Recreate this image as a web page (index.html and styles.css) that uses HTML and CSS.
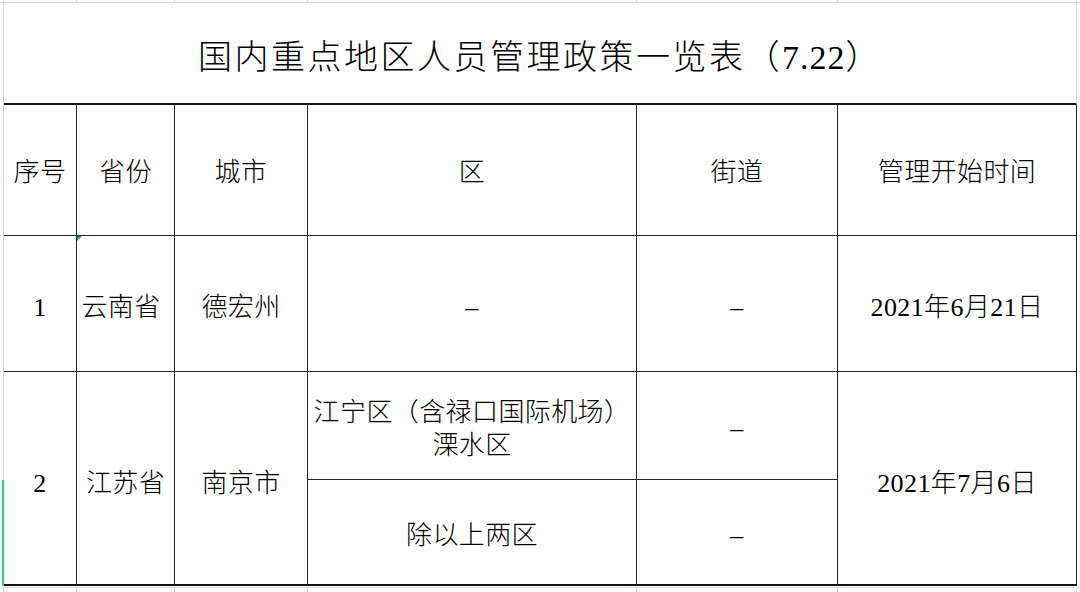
FILE: index.html
```html
<!DOCTYPE html>
<html lang="zh-CN">
<head>
<meta charset="utf-8">
<title>国内重点地区人员管理政策一览表</title>
<link rel="stylesheet" href="styles.css">
</head>
<body>
<div class="sheet">
  <div class="strip strip-top">
    <span></span><span></span><span></span><span></span><span></span><span></span><span></span><span></span>
  </div>
  <div class="table">
    <div class="cell title">国内重点地区人员管理政策一览表（<span class="num">7.22</span>）</div>

    <div class="cell head">序号</div>
    <div class="cell head">省份</div>
    <div class="cell head">城市</div>
    <div class="cell head">区</div>
    <div class="cell head">街道</div>
    <div class="cell head">管理开始时间</div>

    <div class="cell">1</div>
    <div class="cell province-yn"><i class="flag"></i>云南省</div>
    <div class="cell">德宏州</div>
    <div class="cell dash">–</div>
    <div class="cell dash">–</div>
    <div class="cell">2021年6月21日</div>

    <div class="cell span2 last">2</div>
    <div class="cell span2 last">江苏省</div>
    <div class="cell span2 last">南京市</div>
    <div class="cell multi">江宁区（含禄口国际机场）<br>溧水区</div>
    <div class="cell dash sub">–</div>
    <div class="cell span2 last">2021年7月6日</div>
    <div class="cell last sub">除以上两区</div>
    <div class="cell dash last sub">–</div>
  </div>
  <div class="strip strip-bottom">
    <span></span><span></span><span></span><span></span><span></span><span></span><span></span><span></span>
  </div>
  <div class="select-mark"></div>
</div>
</body>
</html>
```

FILE: styles.css
```css
* {
  box-sizing: border-box;
}

html, body {
  margin: 0;
  padding: 0;
  background: #ffffff;
}

.sheet {
  position: relative;
  width: 1080px;
  height: 592px;
  overflow: hidden;
  background: #ffffff;
  font-family: "Liberation Serif", "Noto Sans CJK SC", serif;
  color: #000000;
}

/* light spreadsheet gridline strips */
.strip {
  display: grid;
  grid-template-columns: 4px 73px 98px 133px 329px 201px 239px 4px;
}

.strip span {
  border-right: 1px solid #d3d8e3;
}

.strip span:last-child {
  border-right: none;
}

.strip-top {
  height: 3px;
  border-bottom: 1px solid #d3d8e3;
}

.strip-bottom {
  height: 6px;
  border-top: 1px solid #d3d8e3;
  margin-top: 1px;
}

/* table */
.table {
  display: grid;
  margin-left: 3px;
  width: 1074px;
  border-left: 1px solid #d3d8e3;
  grid-template-columns: 73px 98px 133px 329px 201px 239px;
  grid-template-rows: 102px 131px 136px 108px 106px;
}

.cell {
  position: relative;
  display: flex;
  align-items: center;
  justify-content: center;
  text-align: center;
  border-right: 1px solid #262626;
  border-bottom: 1px solid #262626;
  font-size: 26px;
  line-height: 33px;
  font-weight: 300;
  letter-spacing: 0.4px;
  padding-top: 8px;
}

.title {
  grid-column: 1 / -1;
  font-size: 34px;
  letter-spacing: 2.5px;
  padding-top: 8px;
  border-right: 1px solid #d3d8e3;
  border-bottom: 2px solid #111111;
}

.title .num {
  letter-spacing: 1px;
}

.head {
  padding-top: 5px;
}

.span2 {
  grid-row: span 2;
  padding-top: 10px;
}

.last {
  border-bottom: 2px solid #111111;
}

.multi {
  flex-direction: column;
  padding-top: 6px;
}

.sub {
  padding-top: 6px;
}

.dash {
  font-family: "Liberation Serif", serif;
}

.province-yn {
  padding-right: 9px;
}

.flag {
  position: absolute;
  left: 0;
  top: 0;
  width: 0;
  height: 0;
  border-top: 5px solid #17a33a;
  border-right: 5px solid transparent;
}

.select-mark {
  position: absolute;
  left: 2px;
  top: 480px;
  width: 2px;
  height: 106px;
  background: #34c38c;
}
```
